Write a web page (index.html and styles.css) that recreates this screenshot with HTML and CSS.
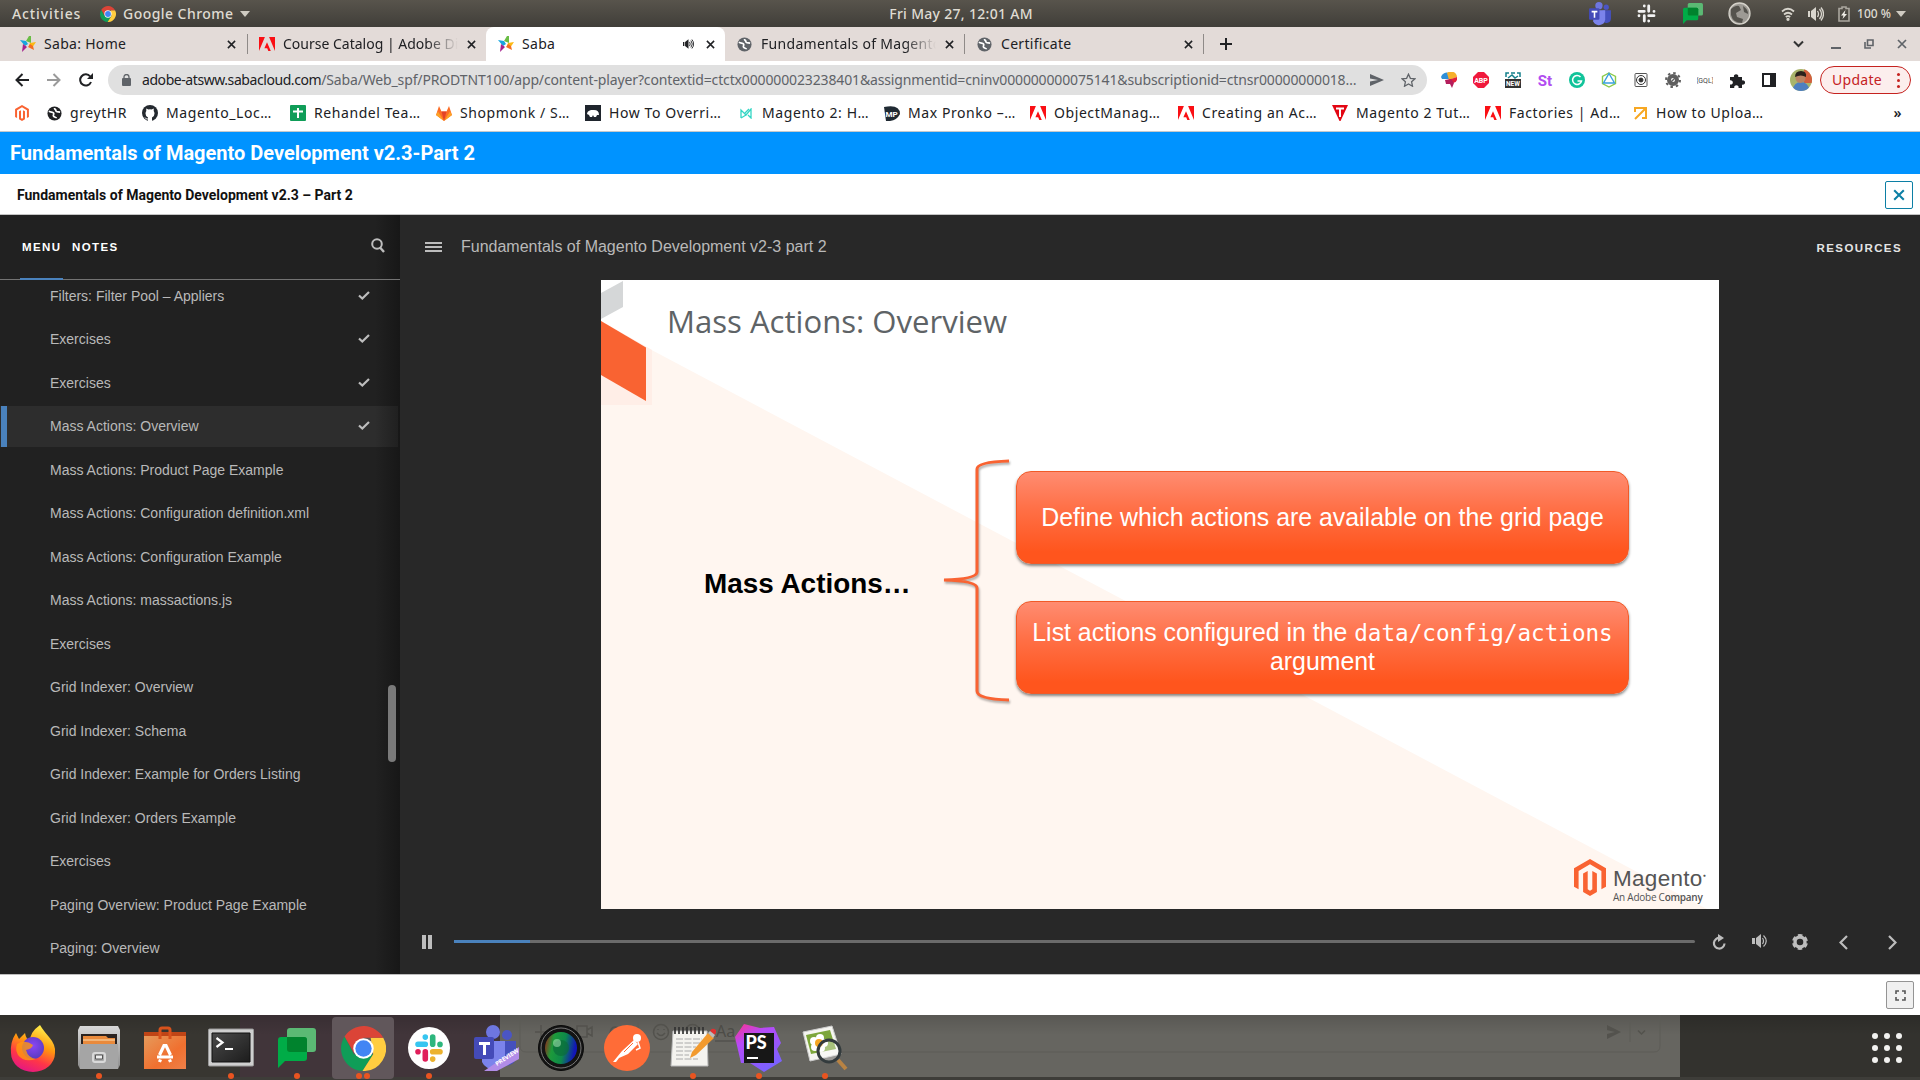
FILE: index.html
```html
<!DOCTYPE html>
<html lang="en">
<head>
<meta charset="utf-8">
<title>Saba</title>
<link rel="stylesheet" href="styles.css">
</head>
<body>
<svg class="defs" width="0" height="0">
  <defs>
    <linearGradient id="g-fire" x1=".7" y1="0" x2=".3" y2="1"><stop offset="0" stop-color="#fff44f"/><stop offset=".4" stop-color="#ff980e"/><stop offset=".7" stop-color="#ff3647"/><stop offset="1" stop-color="#e31587"/></linearGradient>
    <linearGradient id="g-metal" x1="0" y1="0" x2="0" y2="1"><stop offset="0" stop-color="#d8d8d8"/><stop offset="1" stop-color="#8d8d8d"/></linearGradient>
    <linearGradient id="g-bag" x1="0" y1="0" x2="1" y2="1"><stop offset="0" stop-color="#e69a5b"/><stop offset=".6" stop-color="#f0702f"/><stop offset="1" stop-color="#ef8049"/></linearGradient>
    <linearGradient id="g-term" x1="0" y1="0" x2="1" y2="1"><stop offset="0" stop-color="#4a4a4a"/><stop offset="1" stop-color="#1c1c1c"/></linearGradient>
    <radialGradient id="g-globe" cx=".5" cy=".4" r=".6"><stop offset="0" stop-color="#8a46f5"/><stop offset="1" stop-color="#5a3bc0"/></radialGradient>
    <linearGradient id="g-lens" x1="0" y1="0" x2="1" y2=".2"><stop offset="0" stop-color="#a51818"/><stop offset=".3" stop-color="#1d9a3a"/><stop offset=".65" stop-color="#0d8a4a"/><stop offset="1" stop-color="#1216b8"/></linearGradient>
    <linearGradient id="g-ps" x1="0" y1="0" x2=".6" y2="1"><stop offset="0" stop-color="#ff318c"/><stop offset=".35" stop-color="#b74af7"/><stop offset="1" stop-color="#7b61ff"/></linearGradient>
    <symbol id="saba" viewBox="0 0 16 16"><path d="M0 4l6 1 2 3-3 2z" fill="#17a5df"/><path d="M9 0l2 0 0 7-5-2z" fill="#6abd45"/><path d="M16 6l-6 1-1 3 3 2z" fill="#fdb913"/><path d="M14 14l-6-3 2-3 3 2z" fill="#f36f21"/><path d="M2 16l1-8 4 3z" fill="#a6228e"/></symbol>
    <symbol id="adobe" viewBox="0 0 16 14"><path fill="#fa0f14" d="M0 0h5.900L0 14zM10.100 0H16v14zM8 5.200l3.800 8.800H9.300l-1.100-2.800H5.400z"/></symbol>
    <symbol id="globe" viewBox="0 0 16 16"><circle cx="8" cy="8" r="7.500"/><path fill="none" stroke="#fff" stroke-width="1.800" d="M2 5.500c2 1.500 4 .5 5 2s-1 2 0 3.500 3 .5 3 2M8 2c0 2 1.500 1.500 1.500 3s2 1 4.500 1.500"/></symbol>
    <symbol id="x" viewBox="0 0 10 10"><path d="M1 1l8 8M9 1L1 9" fill="none" stroke="currentColor" stroke-width="1.700"/></symbol>
    <symbol id="mage" viewBox="0 0 32 37"><path fill="#f96332" d="M16 0l16 9.200v18.500l-4.600 2.600V11.900L16 5.300 4.600 11.900v18.400L0 27.700V9.200zM18.300 30.300L16 31.700l-2.300-1.400V11.900l-4.600 2.600V33L16 37l6.900-4V14.500l-4.600-2.600z"/></symbol>
    <symbol id="check" viewBox="0 0 12 9"><path d="M1 4.500L4.300 7.500 11 1" fill="none" stroke="#bdbdbd" stroke-width="2.200"/></symbol>
    <symbol id="chrome" viewBox="0 0 44 44"><path fill="#0f9d58" d="M3.500 10.200A22 22 0 0 0 21 44L31.500 27.500 12.500 27.500z"/><path fill="#ffcd40" d="M41.300 11.500A22 22 0 0 1 21 44l10.500-16.500L29 11.500z"/><path fill="#db4437" d="M3.500 10.200A22 22 0 0 1 41.300 11.500H22L12.500 26z"/><circle cx="22" cy="22" r="10" fill="#fff"/><circle cx="22" cy="22" r="8" fill="#4285f4"/></symbol>
    <symbol id="chat" viewBox="0 0 38 40"><rect x="9" width="29" height="24" rx="3" fill="#5bb974"/><path fill="#00ac47" d="M3 9h23a3 3 0 0 1 3 3v18a3 3 0 0 1-3 3H7l-7 7V12a3 3 0 0 1 3-3z"/><path fill="#00832d" d="M9 9h17a3 3 0 0 1 3 3v12H12a3 3 0 0 1-3-3z"/></symbol>
    <symbol id="speaker" viewBox="0 0 16 14"><path fill="currentColor" d="M0 4h2v6H0zM3 4l5-4v14l-5-4z"/><path fill="none" stroke="currentColor" stroke-width="1.300" d="M9.500 4q2 3 0 6M11.500 2q4 5 0 10M13 .5q5 6.500 0 13"/></symbol>
    <symbol id="teams" viewBox="0 0 44 46"><circle cx="33" cy="10" r="5" fill="#4b55c4"/><circle cx="19" cy="7" r="7" fill="#6e76e0"/><path fill="#4550bd" d="M26 16h16v16a9 9 0 0 1-16 5z"/><path fill="#7b83eb" d="M8 16h23v17a12 12 0 0 1-23 4z"/><rect y="12" width="20" height="22" rx="2" fill="#444bb8"/><path fill="#fff" d="M5 17h11v3h-4v10H9V20H5z"/></symbol>
  </defs>
</svg>

<header class="topbar">
  <span class="left"><span class="activities">Activities</span><svg width="16" height="16"><use href="#chrome"/></svg><span class="app">Google Chrome</span><i class="caret"></i></span>
  <span class="clock">Fri May 27, 12:01 AM</span>
  <span class="tray">
    <svg width="23" height="24"><use href="#teams"/></svg>
    <svg width="19" height="19" viewBox="0 0 19 19" fill="none" stroke="#f2f2f2" stroke-width="2.800" stroke-linecap="round"><path d="M7.300 2v.1M2 7.300h5.300M11.700 2v5.300M17 7.300v.1M11.700 11.700H17M11.700 17v.1M7.300 11.700V17M2 11.700v.1"/></svg>
    <svg width="20" height="21"><use href="#chat"/></svg>
    <svg width="23" height="23" viewBox="0 0 23 23"><circle cx="11.500" cy="11.500" r="10.500" fill="#9d9a94" stroke="#d5d2ca" stroke-width="1.300"/><path d="M3 7q5-4 8-3l2 4-5 3 1 4 6 2-1 4q-9 0-11-8zM15 4q5 3 5 8l-4-2z" fill="#55534d"/></svg>
    <svg width="14" height="14" viewBox="0 0 14 14" fill="none" stroke="#d8d5cd" stroke-width="1.700"><path d="M1 4.500q6-5.500 12 0M3 7.500q4-3.500 8 0M4.800 10q2.200-1.800 4.400 0" /><circle cx="7" cy="12.300" r=".8"/></svg>
    <svg width="16" height="14" class="light"><use href="#speaker"/></svg>
    <svg width="12" height="16" viewBox="0 0 12 16"><path d="M1 2.500h3V1h4v1.500h3V15H1z" fill="none" stroke="#aaa79f" stroke-width="1.600"/><path d="M7.500 4L3 9.500h2.500L4.500 13 9 8H6.500z" fill="#f0eee8"/></svg>
    <span class="pct">100 %</span><i class="caret"></i>
  </span>
</header>

<nav class="tabs">
  <div class="tab t1"><svg width="16" height="16"><use href="#saba"/></svg><span class="name">Saba: Home</span><svg class="close"><use href="#x"/></svg></div>
  <div class="tab t2"><svg width="16" height="14"><use href="#adobe"/></svg><span class="name fade">Course Catalog | Adobe Di</span><svg class="close"><use href="#x"/></svg></div>
  <div class="tab active"><svg width="16" height="16"><use href="#saba"/></svg><span class="name">Saba</span><svg class="sound" width="11" height="10"><use href="#speaker"/></svg><svg class="close"><use href="#x"/></svg></div>
  <div class="tab t4"><svg class="gray" width="15" height="15"><use href="#globe"/></svg><span class="name fade">Fundamentals of Magento</span><svg class="close"><use href="#x"/></svg></div>
  <div class="tab t5"><svg class="gray" width="15" height="15"><use href="#globe"/></svg><span class="name">Certificate</span><svg class="close"><use href="#x"/></svg></div>
  <svg class="plus" width="12" height="12" viewBox="0 0 12 12"><path d="M6 0v12M0 6h12" stroke="#202124" stroke-width="2"/></svg>
  <div class="winctl">
    <svg width="11" height="8" viewBox="0 0 11 8"><path d="M1 1.500l4.500 4.500L10 1.500" fill="none" stroke="#333" stroke-width="2"/></svg>
    <svg width="10" height="10" viewBox="0 0 10 10"><path d="M0 9h10" stroke="#5f6368" stroke-width="2"/></svg>
    <svg width="10" height="10" viewBox="0 0 10 10" fill="none" stroke="#5f6368" stroke-width="1.600"><path d="M3.500 1H9v5.500H3.500zM1 3v6h6"/></svg>
    <svg width="10" height="10" class="grayc"><use href="#x"/></svg>
  </div>
</nav>

<div class="toolbar">
  <div class="navbtns">
    <svg width="14" height="14" viewBox="0 0 14 14" fill="none" stroke="#202124" stroke-width="2"><path d="M14 7H2M7.500 1L1.500 7l6 6"/></svg>
    <svg width="14" height="14" viewBox="0 0 14 14" fill="none" stroke="#9a9a9a" stroke-width="2"><path d="M0 7h12M6.500 1l6 6-6 6"/></svg>
    <svg width="14" height="14" viewBox="0 0 14 14"><path d="M12 9a5.600 5.600 0 1 1-.8-5.500" fill="none" stroke="#202124" stroke-width="2"/><path d="M14 0v6H8z" fill="#202124"/></svg>
  </div>
  <div class="omnibox">
    <svg width="9" height="12" viewBox="0 0 9 12"><rect y="4" width="9" height="8" rx="1" fill="#5f6368"/><path d="M2 5V3a2.500 2.500 0 0 1 5 0v2" fill="none" stroke="#5f6368" stroke-width="1.300"/></svg>
    <span class="url"><b>adobe-atsww.sabacloud.com</b>/Saba/Web_spf/PRODTNT100/app/content-player?contextid=ctctx000000023238401&amp;assignmentid=cninv000000000075141&amp;subscriptionid=ctnsr00000000018…</span>
    <svg class="send" width="14" height="12" viewBox="0 0 14 12"><path d="M0 0l14 6L0 12V7.500L8 6 0 4.500z" fill="#5f6368"/></svg>
    <svg width="15" height="14" viewBox="0 0 15 14"><path d="M7.500 1.200l1.900 4.100 4.500.5-3.300 3 .9 4.400-4-2.200-4 2.200.9-4.400-3.300-3 4.500-.5z" fill="none" stroke="#5f6368" stroke-width="1.300"/></svg>
  </div>
  <div class="exts">
    <svg viewBox="0 0 16 16"><path d="M0 5a6 6 0 0 1 8-4v6H1z" fill="#2f8fd8"/><path d="M6 1a6 6 0 0 1 10 4l-8 3z" fill="#f6b02c"/><path d="M16 5q1 5-4 6L7 8z" fill="#e2203c"/><path d="M4 8l6-1 3 4-2 5-2-4-4 0z" fill="#b41e5c"/></svg>
    <svg viewBox="0 0 16 16"><path d="M5 0h6l5 5v6l-5 5H5l-5-5V5z" fill="#f0193c"/><text x="8" y="10.500" font-size="7" font-weight="700" text-anchor="middle" fill="#fff">ABP</text></svg>
    <svg viewBox="0 0 16 16"><path d="M1 5V1h3M6 1h4M12 1h3v4M3 6l4-3 3 3 3-2" fill="none" stroke="#14808c" stroke-width="1.500"/><path d="M0 7h16v9H0z" fill="#333"/><text x="8" y="14" font-size="6.500" font-weight="700" text-anchor="middle" fill="#fff">NEW</text></svg>
    <svg viewBox="0 0 16 16"><text x="8" y="13.500" font-size="15" font-weight="700" text-anchor="middle" fill="#b14cf0">St</text></svg>
    <svg viewBox="0 0 16 16"><circle cx="8" cy="8" r="8" fill="#11c39a"/><path d="M11.500 5a4.500 4.500 0 1 0 1 4H8.500" fill="none" stroke="#fff" stroke-width="1.500"/></svg>
    <svg viewBox="0 0 16 16" fill="none" stroke-width="1.400"><path d="M8 1l6.500 3.500v7L8 15l-6.500-3.500v-7z" stroke="#8ccb4a"/><path d="M8 1.500l5.500 9.500h-11z" stroke="#3aa0e0"/></svg>
    <svg viewBox="0 0 16 16" fill="none" stroke="#333"><rect x="2" y="1.500" width="12" height="13" rx="1" stroke="#555"/><circle cx="8" cy="8" r="4.500"/><circle cx="8" cy="8" r="2" fill="#333"/></svg>
    <svg viewBox="0 0 16 16" fill="none" stroke="#5f5f5f"><circle cx="8" cy="8" r="4" stroke-width="4"/><circle cx="8" cy="8" r="7" stroke-width="2" stroke-dasharray="2.500 3"/><path d="M5.500 10.500l5-5" stroke-width="1.500"/></svg>
    <svg viewBox="0 0 16 16"><text x="8" y="10.500" font-size="7" text-anchor="middle" fill="#444">{GQL}</text></svg>
    <svg viewBox="0 0 16 16"><path d="M1 5h4a2.200 2.200 0 1 1 4.200 0H13v3.500a2.200 2.200 0 1 1 0 4V16H9.500a2.200 2.200 0 1 0-4.200 0H1v-3.500a2.200 2.200 0 1 0 0-4.200z" fill="#202124"/></svg>
    <svg viewBox="0 0 16 16"><path d="M2 2h12v12H2z" fill="#fff" stroke="#202124" stroke-width="2"/><path d="M9 2h5v12H9z" fill="#202124"/></svg>
    <svg class="avatar" viewBox="0 0 22 22"><clipPath id="av"><circle cx="11" cy="11" r="11"/></clipPath><g clip-path="url(#av)"><path fill="#a9b46b" d="M0 0h22v22H0z"/><path fill="#d2603e" d="M14 0h8v14h-8z"/><path fill="#4e7fc0" d="M2 22q2-9 9-9t9 9z"/><circle cx="10.500" cy="9" r="5" fill="#b98463"/><path fill="#2a221c" d="M5 8q0-6 6-6t5 6q-5-3-11 0z"/></g></svg>
  </div>
  <button class="update">Update<i></i></button>
</div>

<div class="bookmarks">
  <a class="k0"><svg width="14" height="16"><use href="#mage"/></svg></a>
  <a class="k1"><svg width="15" height="15" fill="#202124"><use href="#globe"/></svg>greytHR</a>
  <a class="k2"><svg width="16" height="16" viewBox="0 0 16 16"><circle cx="8" cy="8" r="8" fill="#24292f"/><path fill="#fff" d="M6 16v-3.500q-2.500-1-2.500-4Q3.500 7 4.300 6L4.200 3.500 6.500 4.500q1.500-.3 3 0l2.300-1L11.700 6q.8 1 .8 2.500 0 3-2.500 4V16z"/><path d="M6 14q-2 .5-3-1.500" stroke="#fff" fill="none"/></svg>Magento_Loc…</a>
  <a class="k3"><svg width="16" height="16" viewBox="0 0 16 16"><rect width="16" height="16" rx="1" fill="#0f9d58"/><path d="M8 3v10M3 6.500h10" stroke="#fff" stroke-width="2"/></svg>Rehandel Tea…</a>
  <a class="k4"><svg width="16" height="15" viewBox="0 0 16 15"><path fill="#fc6d26" d="M3 0l2.500 5.500h5L13 0l3 9-8 6-8-6z"/><path fill="#e24329" d="M5.500 5.500h5L8 15z"/><path fill="#fca326" d="M0 9l2-3.500L8 15zM16 9l-2-3.500L8 15z"/></svg>Shopmonk / S…</a>
  <a class="k5"><svg width="16" height="16" viewBox="0 0 16 16"><path fill="#1f252d" d="M0 0h16v16H0z"/><path fill="#fff" d="M2 9q0-3 4-4h3q5 0 5 5h-2l-1 2H9l-1-2-1 2H5l-1-2z"/></svg>How To Overri…</a>
  <a class="k6"><svg width="12" height="11" viewBox="0 0 12 11"><path d="M1 10V2l5 5 5-6v9L8 7M6 7L1 10M5 5l4-4" fill="none" stroke="#34d6c4" stroke-width="1.300"/></svg>Magento 2: H…</a>
  <a class="k7"><svg width="16" height="15" viewBox="0 0 16 15"><path fill="#202a33" d="M0 1q16-3 16 7-4 8-14 7z"/><text x="7.500" y="11" font-size="8" font-weight="700" text-anchor="middle" fill="#fff">MP</text></svg>Max Pronko –…</a>
  <a class="k8"><svg width="16" height="14"><use href="#adobe"/></svg>ObjectManag…</a>
  <a class="k9"><svg width="16" height="14"><use href="#adobe"/></svg>Creating an Ac…</a>
  <a class="k10"><svg width="16" height="16" viewBox="0 0 16 16"><path fill="#e30613" d="M0 0h16L8.500 16h-1z"/><path d="M4 3.500h8M8 3.500V12" stroke="#fff" stroke-width="2"/></svg>Magento 2 Tut…</a>
  <a class="k11"><svg width="16" height="14"><use href="#adobe"/></svg>Factories | Ad…</a>
  <a class="k12"><svg width="15" height="14" viewBox="0 0 15 14"><path d="M2 6V2h11v10H9M13 2L2 13" fill="none" stroke="#f7a823" stroke-width="2"/></svg>How to Uploa…</a>
  <span class="more">»</span>
</div>

<h1 class="course">Fundamentals of Magento Development v2.3-Part 2</h1>
<div class="subhead"><h2>Fundamentals of Magento Development v2.3 – Part 2</h2><button class="closebox"><svg width="12" height="12"><use href="#x"/></svg></button></div>

<main class="player">
  <aside class="side">
    <div class="sidehead"><span class="on">MENU</span><span>NOTES</span><svg width="14" height="15" viewBox="0 0 14 15" fill="none" stroke="#bdbdbd"><circle cx="6" cy="6" r="4.800" stroke-width="2"/><path d="M9 9.500l4 4.500" stroke-width="2.400"/></svg></div>
    <ul>
      <li>Filters: Filter Pool – Appliers<svg><use href="#check"/></svg></li>
      <li>Exercises<svg><use href="#check"/></svg></li>
      <li>Exercises<svg><use href="#check"/></svg></li>
      <li class="cur">Mass Actions: Overview<svg><use href="#check"/></svg></li>
      <li>Mass Actions: Product Page Example</li>
      <li>Mass Actions: Configuration definition.xml</li>
      <li>Mass Actions: Configuration Example</li>
      <li>Mass Actions: massactions.js</li>
      <li>Exercises</li>
      <li>Grid Indexer: Overview</li>
      <li>Grid Indexer: Schema</li>
      <li>Grid Indexer: Example for Orders Listing</li>
      <li>Grid Indexer: Orders Example</li>
      <li>Exercises</li>
      <li>Paging Overview: Product Page Example</li>
      <li>Paging: Overview</li>
    </ul>
    <i class="thumb"></i>
  </aside>
  <section class="stage">
    <div class="stagehead"><i class="burger"></i><span>Fundamentals of Magento Development v2-3 part 2</span><b>RESOURCES</b></div>
    <article class="slide">
      <svg class="backdrop" width="1118" height="629" viewBox="0 0 1118 629"><path fill="#fff6f0" d="M0 41l45 26L1106 629H0z"/><path fill="#ffeee7" d="M0 90V41l51 29v55H0z"/><path fill="#f96332" d="M0 41l45 26.500v53.500L0 95z"/><path fill="#d5d7d8" d="M0 13L22 1v26L0 39z"/></svg>
      <h3>Mass Actions: Overview</h3>
      <div class="diagram">
        <strong>Mass Actions…</strong>
        <svg class="brace" width="70" height="252" viewBox="0 0 70 252"><path d="M66 3Q34 4 34 11V114Q34 121 1 122Q34 123 34 130V233Q34 241 66 242" fill="none" stroke="#f96332" stroke-width="3"/></svg>
        <div class="boxes">
          <p>Define which actions are available on the grid page</p>
          <p>List actions configured in the <code>data/config/actions</code> argument</p>
        </div>
      </div>
      <div class="brand"><svg width="32" height="37"><use href="#mage"/></svg><span><em>Magento<sup>●</sup></em><small>An Adobe C<b>ompany</b></small></span></div>
    </article>
    <div class="controls">
      <i class="pause"></i>
      <div class="seek"><i></i></div>
      <svg width="14" height="16" viewBox="0 0 14 16"><path d="M8 4a5.300 5.300 0 1 0 4.500 5.500" fill="none" stroke="#bdbdbd" stroke-width="2.200"/><path d="M6 0l6 4-6 4z" fill="#bdbdbd"/></svg>
      <svg width="16" height="14" viewBox="0 0 16 14" class="vol"><path d="M0 4h3v6H0zM4 4l5-4v14l-5-4z" fill="#bdbdbd"/><path d="M10.500 4q2 3 0 6M11.500 1.500q5.500 5.500 0 11" fill="none" stroke="#bdbdbd" stroke-width="1.200"/></svg>
      <svg width="16" height="16" viewBox="0 0 16 16" fill="none" stroke="#bdbdbd"><circle cx="8" cy="8" r="5" stroke-width="3.400"/><circle cx="8" cy="8" r="7" stroke-width="2" stroke-dasharray="4.500 2.830" stroke-dashoffset="-1.400"/></svg>
      <svg width="9" height="15" viewBox="0 0 9 15"><path d="M8 1L1.500 7.500 8 14" fill="none" stroke="#bdbdbd" stroke-width="2.200"/></svg>
      <svg width="9" height="15" viewBox="0 0 9 15"><path d="M1 1l6.500 6.500L1 14" fill="none" stroke="#bdbdbd" stroke-width="2.200"/></svg>
    </div>
  </section>
</main>
<footer class="foot"><button><svg width="11" height="11" viewBox="0 0 11 11"><path d="M1 4V1h3M7 1h3v3M10 7v3H7M4 10H1V7" fill="none" stroke="#555" stroke-width="1.600"/></svg></button></footer>

<div class="dock">
  <svg class="ghost" width="1920" height="65" viewBox="0 0 1920 65" fill="none" stroke="#53524d" stroke-width="1.500"><path stroke="#5d5c57" stroke-width="1" d="M520 0V31q0 6 6 6H1654q6 0 6-6V0M1630 7v20M562 7v15M638 7v15"/><path d="M541 10v13M535 17h13M577 11h10v11h-10zM587 15l5-3v9l-5-3"/><circle cx="661" cy="17" r="7.500"/><circle cx="692.500" cy="17" r="7.500"/><path d="M657 18q4 5 8 0M658 14v1M664 14v1M610 20q0-8 5-8t5 8M715 26h20"/><path fill="#53524d" stroke="none" d="M1607 10l14 7-14 7v-5l8-2-8-2z"/><path d="M1638 15.500l3.500 3.500 3.500-3.500"/><text x="716" y="22" font-size="16" fill="#4d4c47" stroke="none">Aa</text></svg>
  <div class="cell"><svg width="46" height="48" viewBox="0 0 46 48"><path fill="url(#g-fire)" d="M30 1q3 5 9 12 7 8 6 16A22 19 0 0 1 1 29Q0 18 6 9l3 6 6-6q1 6 5 8 0-9 10-16z"/><circle cx="23" cy="24" r="11" fill="url(#g-globe)"/><path fill="#ff980e" d="M7 20q8-5 16 1-1 4-7 5 2 8 10 9-12 4-18-4-3-5-1-11z" opacity=".8"/></svg></div>
  <div class="cell"><svg width="42" height="44" viewBox="0 0 42 44"><path fill="url(#g-metal)" d="M2 0h38l2 4v35l-2 4H2l-2-4V4z"/><path fill="#2b2320" d="M3 8h36v10H3z"/><path fill="#e98a3c" d="M5 10h23l2 2h7v6H5z"/><path d="M5 14h32" stroke="#fbe0b5"/><path fill="#a5a5a5" d="M2 18h38v25H2z"/><rect x="15" y="27" width="12" height="9" rx="2" fill="#aaa" stroke="#d9d9d9" stroke-width="2"/><path fill="#eee" stroke="#555" d="M17.500 29h7v4h-7z"/></svg><i></i></div>
  <div class="cell"><svg width="42" height="44" viewBox="0 0 42 44"><path fill="#c04516" d="M0 6h42v5H0z"/><path fill="url(#g-bag)" d="M0 10h42v33H0z"/><path d="M16 13V4q0-2 2-2h6q2 0 2 2v9" fill="none" stroke="#d9521c" stroke-width="3"/><path d="M15.500 29L20 19.500h2L26.500 29M13 31h16M16.500 33.500L15.500 36M25.500 33.500l1 2.500" fill="none" stroke="#fff" stroke-width="3.200"/></svg></div>
  <div class="cell"><svg width="46" height="39" viewBox="0 0 46 39"><rect x=".5" y="1" width="45" height="37" rx="1" fill="#cfcfcf" stroke="#999"/><path fill="url(#g-term)" stroke="#111" d="M4 5h38v29H4z"/><path d="M8.500 10l6 4.500-6 4.500M17 21h8" fill="none" stroke="#fff" stroke-width="2.200"/></svg><i></i></div>
  <div class="cell"><svg width="38" height="40"><use href="#chat"/></svg><i></i></div>
  <div class="cell hot"><svg width="45" height="45"><use href="#chrome"/></svg><i></i><i class="two"></i></div>
  <div class="cell"><svg width="42" height="42" viewBox="0 0 42 42"><circle cx="21" cy="21" r="21" fill="#fff"/><g fill="none" stroke-width="5.600" stroke-linecap="round"><path stroke="#36c5f0" d="M17.300 10v.1M10 17.300h7.300"/><path stroke="#2eb67d" d="M24.700 10v7.300M32 17.300v.1"/><path stroke="#ecb22e" d="M24.700 24.700H32M24.700 32v.1"/><path stroke="#e01e5a" d="M17.300 24.700V32M10 24.700v.1"/></g></svg><i></i></div>
  <div class="cell tm"><svg width="46" height="46" viewBox="-1 0 46 46"><use href="#teams" width="44" height="46"/><path fill="#b18ce8" d="M45 22v12L23 46H10z"/><text font-size="6" font-weight="700" fill="#fff" transform="translate(23 41) rotate(-33)">PREVIEW</text></svg></div>
  <div class="cell"><svg width="46" height="46" viewBox="0 0 46 46"><circle cx="23" cy="23" r="22.500" fill="#141414" stroke="#0a0a0a"/><circle cx="23" cy="23" r="20" fill="none" stroke="#777"/><circle cx="23" cy="23" r="16" fill="url(#g-lens)"/><circle cx="23" cy="23" r="8" fill="#0b6c3a" opacity=".7"/><circle cx="19" cy="18" r="4" fill="#b5f0c0" opacity=".5"/></svg></div>
  <div class="cell"><svg width="46" height="46" viewBox="0 0 46 46"><circle cx="23" cy="23" r="23" fill="#ff6c37"/><circle cx="33" cy="13" r="4" fill="#fff"/><path fill="#fff" d="M30 15l4 4-10 10-9 4-3 4-3 0 9-11z"/><path d="M20 27l9-9" stroke="#ff6c37" stroke-width="1"/><path d="M34 17l2 6-4 2" stroke="#fff" stroke-width="1.500" fill="none"/></svg></div>
  <div class="cell"><svg width="46" height="44" viewBox="0 0 46 44"><path fill="#f4f3ef" stroke="#bbb" d="M3 5h34l1 35H1z"/><path d="M5 1v7M9 1v7M13 1v7M17 1v7M21 1v7M25 1v7M29 1v7M33 1v7" stroke="#333" stroke-width="1.700"/><path d="M6 13h26M6 17h24M6 21h20M6 25h16M6 29h13M6 33h22" stroke="#aaa" stroke-dasharray="7 1.500"/><path fill="#f29a2e" d="M38 7l6 5-18 17-6 3 2-6z"/><path fill="#e03131" d="M40 5q2-4 6-1 1 3-2 5z"/><path fill="#bbb" d="M38 7l2-2 5 4-2 3z"/></svg><i></i></div>
  <div class="cell"><svg width="48" height="48" viewBox="0 0 48 48"><path fill="url(#g-ps)" d="M9 0l16 4 14-1 7 16-4 6 5 12-18 11-14-9H6L0 13z"/><path fill="#171717" d="M9 9h30v30H9z"/><path d="M12 34h11" stroke="#fff" stroke-width="2"/><text class="ps" x="10.500" y="25" font-size="18" fill="#fff">PS</text></svg><i></i></div>
  <div class="cell"><svg width="46" height="46" viewBox="0 0 46 46"><path fill="#f5f5f0" stroke="#ccc" d="M1 7l29-6 9 28-31 7z"/><path fill="#7da63b" d="M4 10l24-5 6 19-25 5z"/><g fill="#fff"><circle cx="12" cy="16" r="4"/><circle cx="18" cy="13" r="4"/><circle cx="22" cy="18" r="4"/><circle cx="13" cy="22" r="4"/><circle cx="19" cy="23" r="4"/></g><circle cx="17" cy="18" r="4" fill="#f5a623"/><circle cx="27" cy="26" r="11" fill="#ffffff55" stroke="#333b3d" stroke-width="3"/><path d="M36 35l8 9" stroke="#b98343" stroke-width="4"/></svg><i></i></div>
  <svg class="apps" width="30" height="30" viewBox="0 0 30 30" fill="#f2f2f0"><circle cx="3" cy="3" r="3"/><circle cx="15" cy="3" r="3"/><circle cx="27" cy="3" r="3"/><circle cx="3" cy="15" r="3"/><circle cx="15" cy="15" r="3"/><circle cx="27" cy="15" r="3"/><circle cx="3" cy="27" r="3"/><circle cx="15" cy="27" r="3"/><circle cx="27" cy="27" r="3"/></svg>
</div>
</body>
</html>
```
FILE: styles.css
```css
* { box-sizing: border-box; margin: 0; padding: 0; }
body { width: 1920px; height: 1080px; overflow: hidden; background: #fff; font: 14px/20px "Noto Sans", "Open Sans", sans-serif; color: #202124; }
svg { display: block; flex: none; }
.defs { position: absolute; }
button { border: 0; background: none; font: inherit; }
i { flex: none; }

/* desktop bar */
.topbar { display: flex; align-items: center; height: 27px; padding: 0 14px 0 12px; background: linear-gradient(#58544c, #403e39); color: #dfdbd2; font-weight: 500; }
.left { display: flex; flex: 1; align-items: center; }
.activities { width: 88px; letter-spacing: .9px; }
.app { margin: 0 7px; letter-spacing: .45px; }
.clock { margin: 0 -2px 0 2px; letter-spacing: .3px; }
.caret { width: 0; border: 5px solid transparent; border-top: 6px solid #cfcbc2; border-bottom: 0; }
.tray { display: flex; flex: 1; align-items: center; justify-content: flex-end; }
.tray svg { margin-right: 25px; }
.tray svg:nth-of-type(2) { margin-right: 27px; }
.tray svg:nth-of-type(4) { margin-right: 30px; }
.tray svg:nth-of-type(5) { margin-right: 13px; }
.tray svg:nth-of-type(6) { margin-right: 14px; }
.tray svg:nth-of-type(7) { margin-right: 7px; }
.pct { font-size: 12px; margin-right: 5px; }
.light { color: #d8d5cd; }

/* tab strip */
.tabs { display: flex; align-items: center; height: 34px; background: #e3dbd8; }
.tab { display: flex; align-items: center; height: 34px; padding-right: 10px; letter-spacing: .3px; position: relative; }
.tab .name { flex: 1; margin-left: 8px; white-space: nowrap; overflow: hidden; }
.tab .close { width: 9px; height: 9px; margin-left: 9px; }
.tab .fade { -webkit-mask-image: linear-gradient(90deg, #000 82%, transparent); mask-image: linear-gradient(90deg, #000 82%, transparent); }
.t1 { width: 248px; padding-left: 20px; padding-right: 12px; }
.t2 { width: 238px; padding-left: 11px; letter-spacing: 0; }
.active { width: 239px; padding-left: 12px; background: #fff; border-radius: 8px 8px 0 0; }
.t4 { width: 240px; padding-left: 12px; padding-right: 11px; }
.t5 { width: 239px; padding-left: 12px; padding-right: 11px; }
.t4 .name, .t5 .name { margin-left: 9px; }
.t1::after, .t4::after, .t5::after { content: ""; position: absolute; right: 0; top: 7px; width: 1px; height: 20px; background: #8f8a88; }
.sound { margin-right: 3px; }
.gray { fill: #5f6368; }
.grayc { color: #5f6368; }
.plus { margin-left: 16px; }
.winctl { display: flex; align-items: center; margin-left: auto; padding-right: 13px; gap: 29px; }
.winctl svg:nth-child(2) { margin: 0 -6px 0 -2px; }
.winctl svg:nth-child(4) { margin-left: -6px; }

/* address row */
.toolbar { display: flex; align-items: center; height: 38px; padding: 0 9px 0 15px; }
.navbtns { display: flex; gap: 18px; width: 93px; }
.omnibox { display: flex; align-items: center; width: 1319px; height: 30px; padding: 0 11px 0 14px; border-radius: 15px; background: #e0e0e0; color: #5f6368; }
.url { width: 1233px; margin-left: 11px; white-space: nowrap; letter-spacing: -.14px; }
.url b { font-weight: 400; letter-spacing: -.43px; color: #202124; }
.send { margin-right: 17px; }
.exts { display: flex; align-items: center; gap: 16px; margin-left: 14px; font-family: Roboto, sans-serif; }
.exts svg { width: 16px; height: 16px; }
.exts .avatar { width: 22px; height: 22px; margin-left: -3px; }
.update { display: flex; align-items: center; justify-content: space-between; width: 91px; height: 28px; margin-left: auto; padding: 0 10px 0 11px; border: 1px solid #c5221f; border-radius: 14px; background: #fceeed; color: #c5221f; letter-spacing: .3px; }
.update i { width: 3px; height: 3px; border-radius: 50%; background: #c5221f; box-shadow: 0 -6px #c5221f, 0 6px #c5221f; }

/* bookmarks */
.bookmarks { display: flex; align-items: center; height: 33px; padding: 0 16px 4px 15px; border-bottom: 1px solid #c4c9cc; letter-spacing: .58px; white-space: nowrap; }
.bookmarks a { display: flex; align-items: center; gap: 8px; flex: none; }
.bookmarks text { letter-spacing: 0; font-family: Roboto, sans-serif; }
.k0 { width: 32px; } .k1 { width: 95px; } .k2 { width: 148px; } .k3 { width: 146px; } .k4 { width: 149px; }
.k5 { width: 155px; } .k6 { width: 144px; } .k7 { width: 146px; } .k8 { width: 148px; } .k9 { width: 154px; }
.k10 { width: 153px; } .k11 { width: 148px; } .k12 { width: 130px; }
.bookmarks .k6 { gap: 10px; }
.more { margin-left: auto; margin-right: 2px; font-weight: 600; }

/* course header */
.course { height: 42px; padding-left: 10px; background: #0093ff; color: #fff; font: 700 20px/42px Roboto, sans-serif; }
.subhead { display: flex; align-items: center; justify-content: space-between; height: 41px; padding: 1px 7px 0 17px; border-bottom: 1px solid #c4c4c4; }
.subhead h2 { font: 700 14px/40px Roboto, sans-serif; color: #111; }
.closebox { display: grid; place-items: center; width: 28px; height: 28px; border: 1px solid #0c7fa5; border-radius: 2px; color: #0c7fa5; }

/* player */
.player { display: flex; height: 759px; font-family: "Liberation Sans", sans-serif; }
.side { position: relative; width: 400px; background: linear-gradient(90deg, transparent 375px, #171717), #212121; overflow: hidden; }
.sidehead { display: flex; height: 65px; padding: 0 16px 0 20px; border-bottom: 1px solid #737373; color: #fff; font: 700 11.500px/64px "Liberation Sans", sans-serif; letter-spacing: 1.400px; }
.sidehead span { height: 65px; padding-left: 2px; margin-right: 7px; }
.sidehead .on { width: 43px; border-bottom: 2px solid #4a82bd; }
.sidehead svg { margin: 23px -1px 0 auto; }
.side ul { list-style: none; height: 694px; margin-top: -6px; }
.side li { display: flex; align-items: center; justify-content: space-between; height: 43.500px; padding: 0 30px 0 50px; font-size: 14px; color: #b9b9b9; }
.side li svg { width: 12px; height: 9px; margin-top: -1px; }
.side .cur { height: 41px; margin: 1.200px 2px 1.300px 0; padding-right: 28px; background: linear-gradient(#4a82bd, #4a82bd) 1px 0/6px 100% no-repeat, linear-gradient(90deg, #2d2d2d 375px, #202020); }
.thumb { position: absolute; right: 4px; top: 470px; width: 8px; height: 77px; border-radius: 4px; background: #7a7a7a; }
.stage { flex: 1; display: flex; flex-direction: column; background: #282828; color: #b9b9b9; }
.stagehead { display: flex; align-items: center; height: 65px; padding: 0 18px 0 25px; font-size: 16px; }
.stagehead span { margin: -1px auto 0 19px; }
.stagehead b { color: #e4e4e4; font-size: 11.500px; letter-spacing: 1.400px; }
.burger { width: 17px; height: 10px; margin-top: -1px; border: solid #bdbdbd; border-width: 2px 0; background: linear-gradient(#bdbdbd, #bdbdbd) 0 50%/100% 2px no-repeat; }
.slide { position: relative; width: 1118px; height: 629px; margin-left: 201px; padding: 19px 90px 0 66px; background: #fff; color: #000; }
.backdrop { position: absolute; left: 0; top: 0; }
.slide h3 { position: relative; font: 400 31.100px/44px "Open Sans", sans-serif; color: #5e6366; }
.diagram { position: relative; display: grid; grid-template-columns: 240px 72px 1fr; margin-top: 115px; height: 252px; padding-left: 37px; }
.diagram strong { align-self: center; font-size: 27.900px; line-height: 32px; }
.brace { margin-left: -1px; filter: drop-shadow(1px 2px 1px #0005); }
.boxes { display: grid; grid-template-rows: 93px 93px; gap: 37px; padding-top: 13px; }
.boxes p { width: 613px; padding-top: 31px; border: 1px solid #f05a28; border-radius: 15px; background: linear-gradient(#ff8c71, #ff7047 40%, #ff551d 88%); box-shadow: 0 2px 3px #0007; color: #fff; font-size: 24.860px; line-height: 29px; text-align: center; }
.boxes p:nth-child(2) { padding-top: 16px; }
.boxes code { font: 22.600px/20px "DejaVu Sans Mono", monospace; }
.brand { position: absolute; right: 12px; bottom: 4px; display: flex; gap: 7px; width: 133px; height: 46px; }
.brand span { display: flex; flex-direction: column; white-space: nowrap; color: #555; }
.brand em { font: 400 22.500px/32px "Liberation Sans", sans-serif; letter-spacing: .3px; margin-top: 4px; color: #555; }
.brand sup { font-size: 5px; vertical-align: 9px; line-height: 0; }
.brand small { font: 400 10px/10px "Open Sans", sans-serif; letter-spacing: -.25px; margin-top: -3px; }
.brand small b { font-weight: 600; }
.controls { display: flex; align-items: center; flex: 1; padding: 1px 22px 0 22px; }
.pause { width: 10px; height: 14px; border: solid #bdbdbd; border-width: 0 4px; }
.seek { width: 1241px; height: 3px; margin: -1px 17px 0 22px; background: #6b6b6b; border-radius: 2px; }
.seek i { display: block; width: 76px; height: 3px; background: #4a82bd; }
.controls svg { margin-right: 26px; }
.controls .vol { margin-right: 24px; margin-top: -2px; }
.controls svg:nth-of-type(3) { margin-right: 31px; }
.controls svg:nth-of-type(4) { margin-right: 40px; }
.controls svg:nth-of-type(5) { margin: 0; }

.foot { display: flex; align-items: center; justify-content: flex-end; height: 41px; padding-right: 6px; border-top: 1px solid #bdbdbd; }
.foot button { display: grid; place-items: center; width: 28px; height: 28px; border: 1px solid #949494; border-radius: 2px; background: #f0f0f0; }

/* launcher */
.dock { position: relative; display: flex; height: 65px; background: linear-gradient(#0000 62px, #3e3d39 62px), linear-gradient(#0002, #0000 20px), linear-gradient(90deg, #383631 240px, #41353a 240px 500px, #666560 500px 1680px, #33322e 1680px); }
.ghost { position: absolute; left: 0; top: 0; }
.cell { position: relative; display: flex; align-items: center; justify-content: center; width: 66px; height: 65px; }
.cell i { position: absolute; left: 30px; bottom: 1px; width: 6px; height: 6px; border-radius: 50%; background: #e95420; }
.cell.tm { padding-left: 2px; }
.cell.hot { width: 62px; height: 62px; margin: 2px 2px 0; border-radius: 4px; background: #61575b; }
.hot i { left: 24px; bottom: 0; }
.hot .two { left: 32px; }
.ps { font-family: Lato, sans-serif; font-weight: 900; }
.apps { margin: 18px 18px 0 auto; position: relative; }
```
